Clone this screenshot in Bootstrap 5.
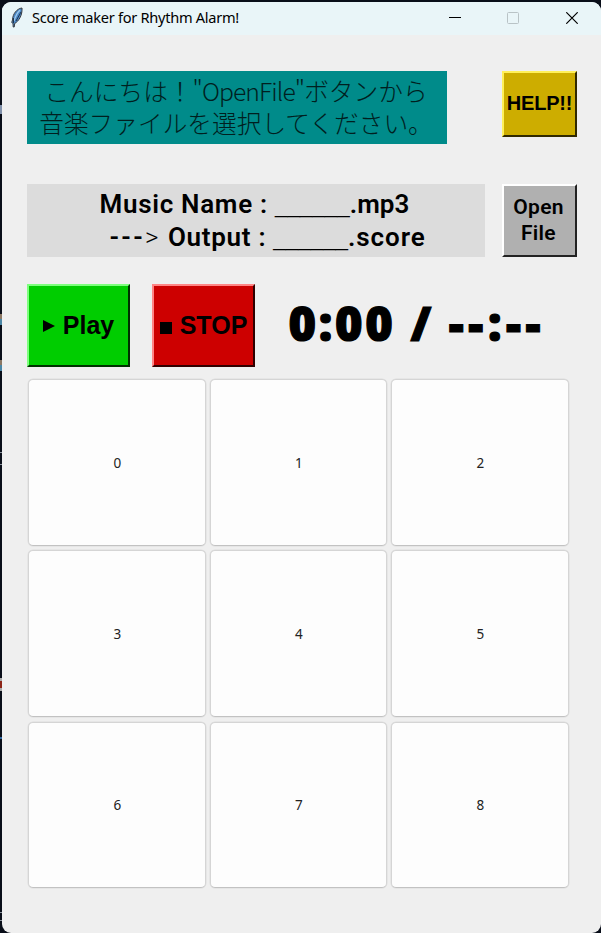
<!DOCTYPE html>
<html lang="ja">
<head>
<meta charset="utf-8">
<meta name="viewport" content="width=device-width, initial-scale=1">
<title>Score maker for Rhythm Alarm!</title>
<link rel="stylesheet" href="https://cdn.jsdelivr.net/npm/bootstrap@5.3.0/dist/css/bootstrap.min.css">
<style>
body{height:933px;padding:2px 0 0 2px;overflow:hidden;color:#000;background:
  linear-gradient(#8090aa,#8090aa) 0 105px/2px 9px no-repeat,
  linear-gradient(#8b7763 5px,#4b86a5 5px) 0 314px/2px 11px no-repeat,
  linear-gradient(#8b7763 5px,#4b86a5 5px) 0 360px/2px 11px no-repeat,
  linear-gradient(#8a929c,#8a929c) 0 452px/2px 1px no-repeat,
  linear-gradient(#8a929c,#8a929c) 0 464px/2px 1px no-repeat,
  linear-gradient(#aaa 3px,#8c2418 3px,#8c2418 10px,#aaa 10px) 0 678px/2px 13px no-repeat,
  linear-gradient(#2d66a0,#2d66a0) 0 737px/2px 2px no-repeat,
  linear-gradient(#8a929c,#8a929c) 0 912px/2px 1px no-repeat,
  linear-gradient(#8a929c,#8a929c) 0 920px/2px 1px no-repeat,
  #090e19}
.app-window{height:931px;background:#efefef;border-radius:9px}
.title-bar{height:32.5px;background:#e9f5f8;padding:0 23.5px 0 6px}
.title-text{font:14.6px/32px "Noto Sans","Open Sans",sans-serif;letter-spacing:-.28px;margin:-2px 0 0 8px}
.window-icons{gap:46.5px}
.app-main{padding:36.5px 24px 0 25px}
.message{width:420px;height:73px;background:#008b8a;font:300 24.7px/32px "Noto Sans CJK JP",sans-serif;padding:3px 2px 0 0;color:#001f1f}
.message .latin{letter-spacing:-.9px}
.names{width:458px;height:73px;background:#dcdcdc;font:600 26px/32.5px Roboto,sans-serif;padding-top:4px;letter-spacing:.7px}
.names>div{height:32.5px}
.line-name{padding-left:72.5px}
.line-out{padding-left:82.5px}
.thin{font-weight:300}
.blank-space{font:22.4px/1 "Liberation Sans",sans-serif;letter-spacing:0}
.arrow{letter-spacing:2.3px}
.ext-name{letter-spacing:.1px}
.ext-score{letter-spacing:.9px}
.tk{border:2px solid;border-radius:0;padding:0;display:flex;align-items:center;justify-content:center;white-space:nowrap;color:#000!important;text-align:center}
.tk-help{width:75px;height:65.5px;background:#cdad00!important;border-color:#fff05a #302900 #302900 #fff05a!important;font:bold 20px "Liberation Sans",sans-serif;letter-spacing:-.2px}
.tk-open{width:75px;height:73px;background:#b0b0b0!important;border-color:#fff #222 #222 #fff!important;font:600 21px/26px Roboto,sans-serif;letter-spacing:.3px;padding:0 2px 1px 0}
.tk-play,.tk-stop{width:103px;height:83px;font:bold 25px "Liberation Sans",sans-serif;gap:8px}
.tk-play{background:#00cd00!important;border-color:#7dff7d #003000 #003000 #7dff7d!important}
.tk-stop{background:#cd0000!important;border-color:#ff8585 #300000 #300000 #ff8585!important;margin-left:22px}
.tk-stop svg{margin-top:4px}
.timer{font:800 47px/64px "Open Sans",sans-serif;margin:-5px 0 0 33.5px;white-space:nowrap;letter-spacing:2.7px;-webkit-text-stroke:1.2px #000}
.timer .total{letter-spacing:4.6px}
.names-row{margin-top:40px}
.play-row{margin-top:27px;height:83px}
.pads{display:grid;grid-template-columns:repeat(3,177.5px);grid-auto-rows:166.5px;column-gap:4px;row-gap:4.8px;margin:12px 0 0 1px}
.pad{background:#fdfdfd!important;border:1.5px solid #d5d5d5!important;border-bottom-color:#c2c2c2!important;box-shadow:0 0 0 .5px #dedede;border-radius:5px;font:13.5px "Noto Sans",sans-serif;color:#222!important;padding:7px 6px 6px 7px}
</style>
</head>
<body>
<div class="app-window overflow-hidden">
  <header class="title-bar d-flex align-items-center">
    <svg width="16" height="22" viewBox="0 0 16 22"><path d="M14 1C9 1.500 4.500 7 4.500 13l-.8 2.500 1.300.8.200 3.700h1l.5-3.500C11 14 14.500 8 14 1z" fill="#4a86c4" stroke="#3a3d42" stroke-width="1"/><path d="M12 3C9 6 7.500 9 6 14" fill="none" stroke="#9cc8ec" stroke-width="1.300"/><path d="M13 5 8 14M5.500 11l0 5" fill="none" stroke="#1d3450" stroke-width="1"/></svg>
    <span class="title-text">Score maker for Rhythm Alarm!</span>
    <div class="window-icons d-flex align-items-center ms-auto">
      <svg width="12" height="12" viewBox="0 0 12 12"><path d="M0 5.500h12" stroke="#000"/></svg>
      <svg width="12" height="12" viewBox="0 0 12 12"><rect x=".5" y=".5" width="11" height="11" rx="1" fill="none" stroke="#b9c3c6"/></svg>
      <svg width="12" height="12" viewBox="0 0 12 12"><path d="M.3.300 11.700 11.700M11.700.3.300 11.700" stroke="#000" stroke-width="1.200"/></svg>
    </div>
  </header>
  <main class="app-main">
    <div class="d-flex justify-content-between align-items-start">
      <div class="message text-center text-nowrap">こんにちは！<span class="latin">"OpenFile"</span>ボタンから<br>音楽ファイルを選択してください。</div>
      <button class="btn tk tk-help">HELP!!</button>
    </div>
    <div class="names-row d-flex justify-content-between">
      <div class="names text-nowrap">
        <div class="line-name">Music Name : <span class="blank-space">______</span><span class="ext-name">.mp3</span></div>
        <div class="line-out"><span class="arrow">---<span class="thin">&gt;</span></span> Output : <span class="blank-space">______</span><span class="ext-score">.score</span></div>
      </div>
      <button class="btn tk tk-open">Open<br>File</button>
    </div>
    <div class="play-row d-flex align-items-center">
      <button class="btn tk tk-play"><svg width="12" height="12" viewBox="0 0 12 12"><path d="M0 0 12 6 0 12z"/></svg>Play</button>
      <button class="btn tk tk-stop"><svg width="12" height="12" viewBox="0 0 12 12"><path d="M0 0h12v12H0z"/></svg>STOP</button>
      <div class="timer">0:00 / <span class="total">--:--</span></div>
    </div>
    <div class="pads">
      <button class="btn pad">0</button><button class="btn pad">1</button><button class="btn pad">2</button>
      <button class="btn pad">3</button><button class="btn pad">4</button><button class="btn pad">5</button>
      <button class="btn pad">6</button><button class="btn pad">7</button><button class="btn pad">8</button>
    </div>
  </main>
</div>
<script src="https://cdn.jsdelivr.net/npm/bootstrap@5.3.0/dist/js/bootstrap.bundle.min.js"></script>
</body>
</html>
